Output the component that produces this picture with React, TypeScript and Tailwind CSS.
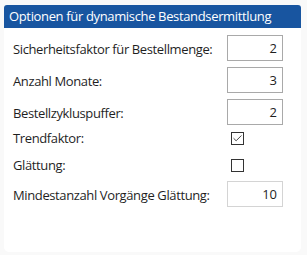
import { Check } from 'lucide-react';

type Row =
  | { kind: 'input'; label: string; value: string; muted?: boolean }
  | { kind: 'check'; label: string; checked: boolean };

const ROWS: Row[] = [
  { kind: 'input', label: 'Sicherheitsfaktor für Bestellmenge:', value: '2' },
  { kind: 'input', label: 'Anzahl Monate:', value: '3' },
  { kind: 'input', label: 'Bestellzykluspuffer:', value: '2' },
  { kind: 'check', label: 'Trendfaktor:', checked: true },
  { kind: 'check', label: 'Glättung:', checked: false },
  { kind: 'input', label: 'Mindestanzahl Vorgänge Glättung:', value: '10', muted: true },
];

export default function App() {
  return (
    <div className="w-[307px] h-[255px] bg-[#f9f9f9] pt-[5px] px-[4px] font-['Open_Sans',sans-serif]">
      <div className="w-[297px] h-[247px] bg-white rounded-b-[5px] rounded-t-[3px] overflow-hidden">
        <div className="h-[23px] bg-[#1855a0] text-white text-[13px] leading-[23px] pl-[5px] tracking-[-0.35px]">
          Optionen für dynamische Bestandsermittlung
        </div>

        <div className="flex flex-col pl-[9px] pr-[18px] text-[13px] text-[#1f1f1f]">
          {/* number fields */}
          {ROWS.slice(0, 3).map((row, i) => (
            <div key={i} className={`flex items-center h-[26px] ${i === 0 ? 'mt-[7px]' : 'mt-[6px]'}`}>
              <span className="flex-1 pt-[4px] tracking-[-0.38px]">{row.label}</span>
              {row.kind === 'input' && (
                <div className="w-[56px] h-[26px] border border-[#a9a9a9] text-right pr-[5px] leading-[24px]">
                  {row.value}
                </div>
              )}
            </div>
          ))}

          {/* checkbox rows */}
          {ROWS.slice(3, 5).map((row, i) => (
            <div key={i} className="flex items-center h-[27px]">
              <span className="flex-1 tracking-[-0.38px]">{row.label}</span>
              {row.kind === 'check' && (
                <div className="w-[56px] flex">
                  <div className="ml-[4px] w-[13px] h-[13px] border border-[#333333] flex items-center justify-center">
                    {row.checked && <Check size={11} strokeWidth={2} className="text-[#333333]" />}
                  </div>
                </div>
              )}
            </div>
          ))}

          {ROWS.slice(5).map((row, i) => (
            <div key={i} className="flex items-center h-[26px] mt-[2px]">
              <span className="flex-1 pt-[4px] tracking-[-0.38px]">{row.label}</span>
              {row.kind === 'input' && (
                <div className="w-[56px] h-[26px] border border-[#d4d4d4] text-right pr-[5px] leading-[24px]">
                  {row.value}
                </div>
              )}
            </div>
          ))}
        </div>
      </div>
    </div>
  );
}
